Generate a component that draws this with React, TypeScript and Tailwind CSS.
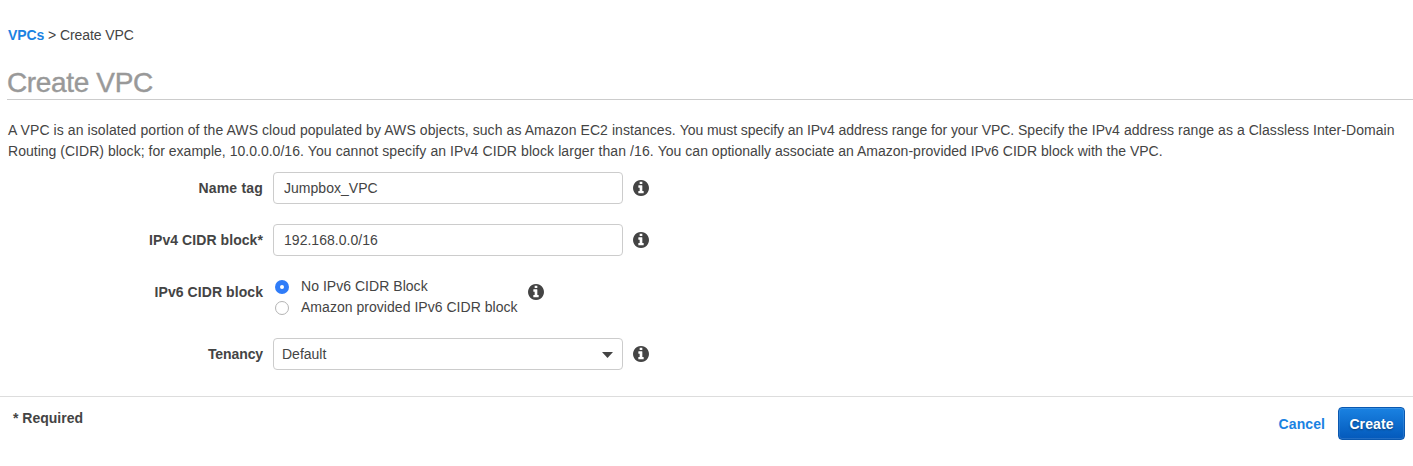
import type { ReactNode } from 'react';

function InfoIcon() {
  return (
    <svg viewBox="0 128 1536 1536" className="size-4 shrink-0" fill="#444444" aria-hidden="true">
      <path d="M1024 1376v-160q0-14-9-23t-23-9h-96v-512q0-14-9-23t-23-9h-320q-14 0-23 9t-9 23v160q0 14 9 23t23 9h96v320h-96q-14 0-23 9t-9 23v160q0 14 9 23t23 9h448q14 0 23-9t9-23zm-128-896v-160q0-14-9-23t-23-9h-192q-14 0-23 9t-9 23v160q0 14 9 23t23 9h192q14 0 23-9t9-23zm640 416q0 209-103 385.5t-279.5 279.5-385.5 103-385.5-103-279.5-279.5-103-385.5 103-385.5 279.5-279.5 385.5-103 385.5 103 279.5 279.5 103 385.5z" />
    </svg>
  );
}

function Row({ label, className, labelClass, children }: { label: string; className: string; labelClass: string; children: ReactNode }) {
  return (
    <div className={`flex items-center ${className}`}>
      <div className={`w-[263px] shrink-0 text-right font-bold ${labelClass}`}>{label}</div>
      <div className="ml-[10px] flex items-center gap-[10px]">
        {children}
        <InfoIcon />
      </div>
    </div>
  );
}

function TextField({ value }: { value: string }) {
  return (
    <input
      className="h-8 w-[350px] rounded-[4px] border border-[#cccccc] bg-white px-[10px] tracking-[0.03px] outline-none"
      defaultValue={value}
    />
  );
}

function RadioOption({ label, checked }: { label: string; checked?: boolean }) {
  return (
    <label className="flex h-[21px] items-center">
      <span
        className={
          checked
            ? 'ml-[2px] mt-[2px] flex size-[14px] items-center justify-center rounded-full bg-[#2f7cf8]'
            : 'ml-[2px] mt-[2px] flex size-[14px] rounded-full border border-[#b4b4b4] bg-white'
        }
      >
        {checked && <span className="size-1 rounded-full bg-white" />}
      </span>
      <span className="ml-3 whitespace-nowrap tracking-[0.035px]">{label}</span>
    </label>
  );
}

export default function App() {
  return (
    <div className="h-[466px] overflow-hidden bg-white font-['Liberation_Sans',Arial,sans-serif] text-[14px] leading-[21px] text-[#444444]">
      <nav className="pl-2 pt-[25px] tracking-[-0.08px]">
        <a className="font-bold text-[#1a82e2]">VPCs</a> &gt; Create VPC
      </nav>
      <h1 className="ml-[7px] mt-[19px] h-[35px] border-b border-[#cccccc] text-[28px] leading-[36px] tracking-[-0.35px] text-[#999999] [-webkit-text-stroke:0.4px_#999999]">
        Create VPC
      </h1>
      <p className="ml-2 mt-5 whitespace-nowrap">
        <span className="tracking-[0.08px]">
          A VPC is an isolated portion of the AWS cloud populated by AWS objects, such as Amazon EC2 instances.{' '}
        </span>
        <span className="tracking-[-0.07px]">You must specify an IPv4 address range for your VPC. </span>
        <span className="tracking-[0.055px]">Specify the IPv4 address range as a Classless Inter-Domain</span>
        <br />
        <span className="tracking-[0.02px]">Routing (CIDR) block; for example, 10.0.0.0/16. </span>
        <span className="tracking-[0.09px]">You cannot specify an IPv4 CIDR block larger than /16. </span>
        <span className="tracking-[0.015px]">
          You can optionally associate an Amazon-provided IPv6 CIDR block with the VPC.
        </span>
      </p>
      <form className="mt-[10px]">
        <Row label="Name tag" className="h-8" labelClass="tracking-[0.2px]">
          <TextField value="Jumpbox_VPC" />
        </Row>
        <Row label="IPv4 CIDR block*" className="mt-5 h-8" labelClass="tracking-[0.07px]">
          <TextField value="192.168.0.0/16" />
        </Row>
        <Row label="IPv6 CIDR block" className="mt-5 h-8" labelClass="tracking-[0.07px]">
          <div className="flex flex-col pt-[9px]">
            <RadioOption label="No IPv6 CIDR Block" checked />
            <RadioOption label="Amazon provided IPv6 CIDR block" />
          </div>
        </Row>
        <Row label="Tenancy" className="mt-[30px] h-8" labelClass="tracking-[-0.1px]">
          <div className="flex h-8 w-[350px] items-center justify-between rounded-[4px] border border-[#cccccc] bg-white pl-2 pr-[9px]">
            <span>Default</span>
            <svg width="11" height="6" viewBox="0 0 11 6" className="mt-[2px]" fill="#444444">
              <path d="M0 0h11L5.5 6z" />
            </svg>
          </div>
        </Row>
      </form>
      <footer className="mt-[26px] flex items-start justify-between border-t border-[#dddddd] pl-[13px] pr-2 pt-[10px] font-bold">
        <span className="mt-px">* Required</span>
        <div className="flex items-center gap-[13px]">
          <a className="pt-[2px] tracking-[0.08px] text-[#1a82e2]">Cancel</a>
          <button
            type="button"
            className="h-[33px] w-[67px] rounded-[4px] border border-[#0a58b0] bg-linear-to-b from-[#1a82e2] to-[#0459bb] pt-[2px] tracking-[0.1px] text-white shadow-[inset_0_0_0_1px_rgba(255,255,255,0.12)] [text-shadow:0_1px_2px_rgba(0,0,0,0.4)]"
          >
            Create
          </button>
        </div>
      </footer>
    </div>
  );
}
